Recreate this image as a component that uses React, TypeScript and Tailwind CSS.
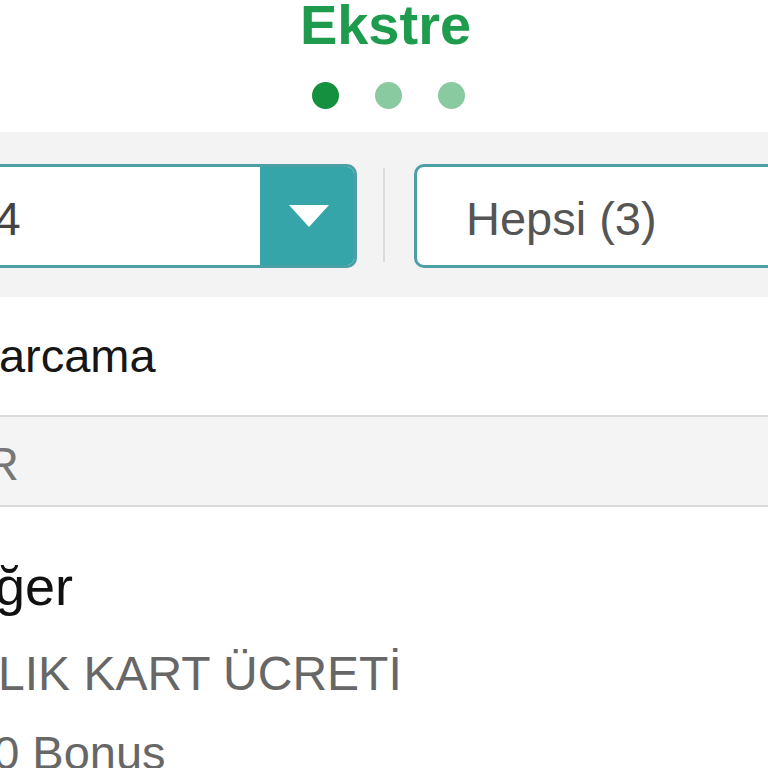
const FONT = "font-['Liberation_Sans',Arial,sans-serif]";

function Dots() {
  return (
    <div className="flex justify-center gap-[36px] pl-[8px] mt-[32px]">
      <span className="w-[27px] h-[27px] rounded-full bg-[#14903f]" />
      <span className="w-[27px] h-[27px] rounded-full bg-[#8acaa1]" />
      <span className="w-[27px] h-[27px] rounded-full bg-[#8acaa1]" />
    </div>
  );
}

function Filters() {
  return (
    <div className="h-[165px] bg-[#f3f3f3] pt-[32px] flex items-start overflow-hidden">
      {/* period select, partly off screen on the left */}
      <div className="-ml-[136px] w-[493px] h-[104px] shrink-0 flex border-[3px] border-[#4c9fa4] rounded-[10px] bg-white overflow-hidden">
        <div className="flex-1 flex items-center pl-[49px] pt-[6px] text-[47px] text-[#444]">2024</div>
        <div className="w-[97px] -mr-[3px] bg-[#36a5aa] flex items-center justify-center">
          <svg width="40" height="22" viewBox="0 0 40 22">
            <path d="M0 0 H40 L20 22 Z" fill="#ffffff" />
          </svg>
        </div>
      </div>
      <div className="ml-[26px] mt-[4px] w-[2px] h-[94px] bg-[#dcdcdc] shrink-0" />
      {/* type select */}
      <div className="ml-[29px] w-[420px] h-[104px] shrink-0 flex items-center border-[3px] border-[#4c9fa4] rounded-[10px] bg-white pl-[49px] pt-[6px] text-[47px] text-[#555]">
        Hepsi (3)
      </div>
    </div>
  );
}

export default function App() {
  return (
    <div className={`${FONT} w-[768px] h-[768px] bg-white overflow-hidden`}>
      <div className="h-[132px]">
        <h1 className="text-center text-[56px] leading-[50px] font-bold text-[#1e9b4c] pl-[3px]">Ekstre</h1>
        <Dots />
      </div>

      <Filters />

      <div className="h-[118px] leading-[118px] text-[47px] text-[#161616] whitespace-nowrap">
        <span className="inline-block -ml-[35px]">Harcama</span>
      </div>

      <div className="h-[92px] bg-[#f4f4f4] border-y-2 border-[#dadada] pt-[6px] flex items-center text-[47px] text-[#777] whitespace-nowrap">
        <span className="-ml-[130px]">DİĞER</span>
      </div>

      <div className="pt-[52px] whitespace-nowrap">
        <div className="text-[54px] leading-[54px] text-[#111]">
          <span className="inline-block -ml-[56px]">Diğer</span>
        </div>
        <div className="mt-[37px] text-[48px] leading-[48px] text-[#676767]">
          <span className="inline-block -ml-[74px]">YILLIK KART ÜCRETİ</span>
        </div>
        <div className="mt-[31px] text-[47px] leading-[47px] text-[#676767]">
          <span className="inline-block -ml-[33px]">10 Bonus</span>
        </div>
      </div>
    </div>
  );
}
